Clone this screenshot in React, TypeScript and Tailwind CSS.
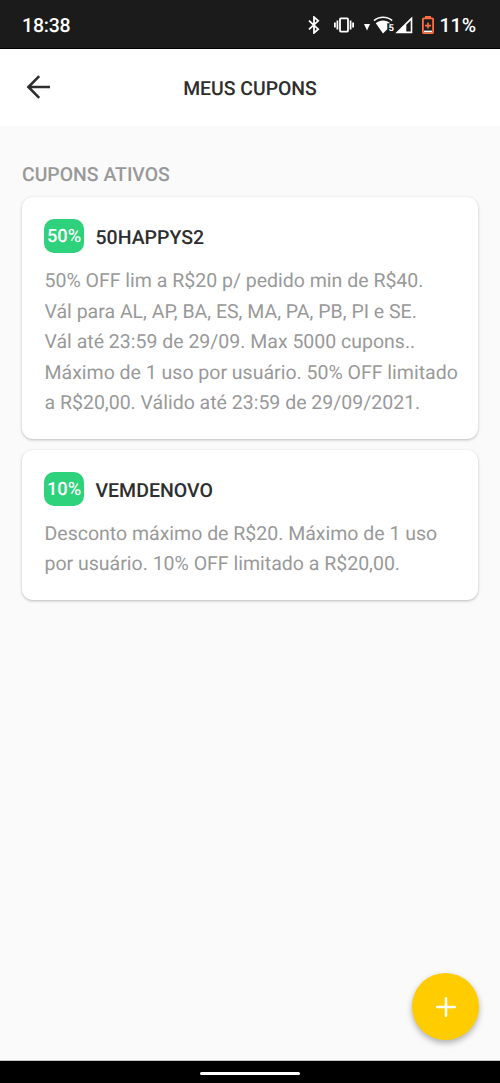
interface Coupon {
  code: string;
  percent: number;
  description: string;
}

const coupons: Coupon[] = [
  {
    code: "50HAPPYS2",
    percent: 50,
    description:
      "50% OFF lim a R$20 p/ pedido min de R$40.\nVál para AL, AP, BA, ES, MA, PA, PB, PI e SE.\nVál até 23:59 de 29/09. Max 5000 cupons..\nMáximo de 1 uso por usuário. 50% OFF limitado\na R$20,00. Válido até 23:59 de 29/09/2021."
  },
  {
    code: "VEMDENOVO",
    percent: 10,
    description: "Desconto máximo de R$20. Máximo de 1 uso\npor usuário. 10% OFF limitado a R$20,00."
  }
];

const BluetoothIcon = () => (
  <svg className="h-[18px] w-[12px]" viewBox="0 0 12 18" fill="none" stroke="currentColor" strokeWidth="1.8">
    <path d="M1 4.6 10.2 13.2 6 16.9V1.1L10.2 4.8 1 13.4" />
  </svg>
);

const VibrateIcon = () => (
  <svg className="ml-[14px] h-[16px] w-[20px]" viewBox="0 0 20 16" fill="none" stroke="currentColor" strokeWidth="1.8">
    <rect x="6" y="1.4" width="8" height="13.2" rx="0.8" />
    <path d="M3.4 3.5v9M16.6 3.5v9M.9 5.5v5M19.1 5.5v5" />
  </svg>
);

const WifiIcon = () => (
  <svg className="ml-[9px] h-[18px] w-[32px]" viewBox="0 0 32 18">
    <path d="M1 8h6L4 14.5z" fill="currentColor" />
    <path d="M11 4.6C16 .1 24.2.1 29.2 4.6" fill="none" stroke="currentColor" strokeWidth="1.5" />
    <path d="M12.8 7.2c4.2-3.6 10.4-3.6 14.5 0h-3v6L20 17.4z" fill="currentColor" />
    <text x="25.4" y="15" fontSize="9.5" fontWeight="700" fill="currentColor">5</text>
  </svg>
);

const SignalIcon = () => (
  <svg className="h-[18px] w-[18px]" viewBox="0 0 18 18">
    <path d="M.3 17.2 17.3.6v16.6z" fill="currentColor" />
    <path d="M11.3 8.8 15.7 4.4v11.2h-4.4z" fill="#1b1b1b" />
  </svg>
);

const BatteryIcon = () => (
  <svg className="ml-[9px] h-[18px] w-[12px]" viewBox="0 0 12 18">
    <path d="M3 0h6v2H3z" fill="#ff6d42" />
    <rect x=".9" y="2.4" width="10.2" height="14.7" rx=".8" fill="none" stroke="#ff6d42" strokeWidth="1.8" />
    <path d="M6 6.6v6M3 9.6h6" stroke="#ff6d42" strokeWidth="1.6" />
    <path d="M2 14.6h8v1.6H2z" fill="#fff" />
  </svg>
);

const StatusBar = () => (
  <div className="flex h-[49px] shrink-0 items-center justify-between border-b border-black bg-[#1b1b1b] pl-[22px] pr-6 pt-[2px] text-white">
    <span className="pt-0.5 text-[19.5px] font-medium leading-none tracking-[-0.2px]">18:38</span>
    <div className="flex items-center">
      <BluetoothIcon />
      <VibrateIcon />
      <WifiIcon />
      <SignalIcon />
      <BatteryIcon />
      <span className="ml-[5px] pt-0.5 text-[19.5px] font-medium leading-none">11%</span>
    </div>
  </div>
);

const Header = () => (
  <header className="grid h-[77px] shrink-0 grid-cols-[1fr_auto_1fr] items-center bg-white text-[#2e2e2e]">
    <button type="button" aria-label="Voltar" className="mb-px ml-[26px] w-6">
      <svg className="h-6 w-6" viewBox="0 0 24 24" fill="none" stroke="currentColor" strokeWidth="2.6">
        <path d="M24 12H2.5M13.2 1.2 2.4 12l10.8 10.8" />
      </svg>
    </button>
    <h1 className="pt-[3px] text-[19.4px] font-medium leading-none">MEUS CUPONS</h1>
  </header>
);

const CouponCard = ({ coupon }: { coupon: Coupon }) => (
  <article className="rounded-[11px] bg-white px-[22px] pb-5 pt-[22px] shadow-[0_1px_3px_rgba(0,0,0,0.25)]">
    <div className="flex items-center gap-[11.5px]">
      <span className="flex h-[34px] w-10 items-center justify-center rounded-[10px] bg-[#2ed17c] pt-[3px] text-[18.3px] font-medium leading-none text-white">
        {coupon.percent}%
      </span>
      <h3 className="pt-1 text-[19.5px] font-medium leading-none text-[#2e2e2e]">{coupon.code}</h3>
    </div>
    <p className="mt-[13px] whitespace-pre pl-[0.5px] text-[19.5px] leading-[30.5px] text-[#999]">{coupon.description}</p>
  </article>
);

export default function App() {
  return (
    <div className="flex h-[1083px] w-[500px] flex-col overflow-hidden bg-[#fafafa] font-[Roboto,sans-serif] [text-rendering:geometricPrecision]">
      <StatusBar />
      <Header />
      <main className="flex-1 px-[22px] pt-[39px]">
        <h2 className="text-[19.4px] font-medium leading-5 text-[#999]">CUPONS ATIVOS</h2>
        <div className="mt-[12px] flex flex-col gap-[11px]">
          {coupons.map((coupon) => (
            <CouponCard key={coupon.code} coupon={coupon} />
          ))}
        </div>
      </main>
      <div className="flex shrink-0 justify-end pb-5 pr-[21px]">
        <button
          type="button"
          aria-label="Adicionar cupom"
          className="flex h-[67px] w-[67px] items-center justify-center rounded-full bg-[#ffcc00] text-white shadow-[0_3px_6px_rgba(0,0,0,0.3)]"
        >
          <svg className="h-5 w-5" viewBox="0 0 20 20" fill="none" stroke="currentColor" strokeWidth="2.5" strokeLinecap="round">
            <path d="M10 1.3v17.4M1.3 10h17.4" />
          </svg>
        </button>
      </div>
      <nav className="flex h-[23px] shrink-0 items-center justify-center border-t border-[#c4c4c4] bg-black pt-[2px]">
        <div className="h-[3px] w-[100px] rounded-full bg-white" />
      </nav>
    </div>
  );
}
